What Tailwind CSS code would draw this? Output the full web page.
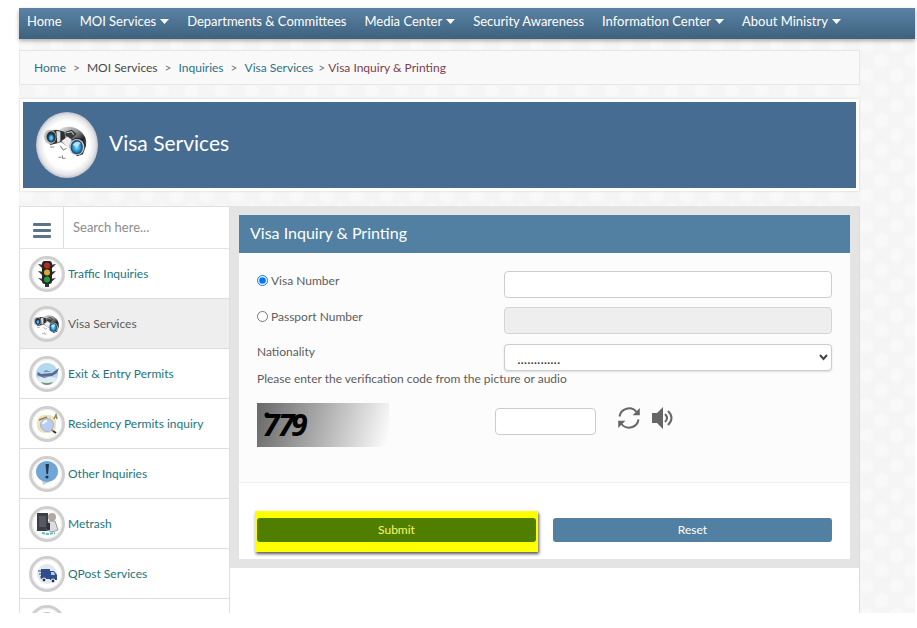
<!DOCTYPE html>
<html lang="en">
<head>
<meta charset="utf-8">
<meta name="viewport" content="width=device-width, initial-scale=1">
<title>Visa Inquiry &amp; Printing</title>
<script src="https://cdn.jsdelivr.net/npm/@tailwindcss/browser@4"></script>
</head>
<body class="bg-white pt-2 pr-[2px] pb-4 pl-[19px] font-['Lato',sans-serif] text-xs text-[#5c5c5c]">
<!-- shared symbols -->
<svg class="absolute size-0" aria-hidden="true">
  <defs>
    <radialGradient id="disc"><stop offset="0.72" stop-color="#fff"/><stop offset="0.9" stop-color="#e6e6ea"/><stop offset="1" stop-color="#bfc2c8"/></radialGradient>
    <linearGradient id="metal" x1="0" y1="0" x2="1" y2="1"><stop offset="0" stop-color="#f0f0f0"/><stop offset="0.45" stop-color="#8b8f92"/><stop offset="0.7" stop-color="#222"/><stop offset="1" stop-color="#999"/></linearGradient>
    <radialGradient id="lens"><stop offset="0" stop-color="#8fe0ff"/><stop offset="0.6" stop-color="#2994d4"/><stop offset="1" stop-color="#103a5c"/></radialGradient>
    <symbol id="binoculars" viewBox="0 0 44 34">
      <path d="M13 7C18 0 29-1 36 5c5 4 7 9 6 14l-5 6-12-4-8-5z" fill="url(#metal)"/>
      <path d="M3 6l10-2 8 2 1 8-7 3-8 2z" fill="#2b2d2f"/>
      <path d="M13 5l4 1v9l-3 2z" fill="#ddd"/>
      <path d="M22 6l6-2 5 4-5 5-6-3z" fill="#3a3a3a"/><path d="M23 7l5-1 2 3" fill="none" stroke="#ccc"/>
      <path d="M18 15l6-4 4 3-3 8z" fill="#eee"/>
      <ellipse cx="7" cy="11" rx="6" ry="7" fill="#bcbcbc"/><ellipse cx="8" cy="11" rx="4.500" ry="5.500" fill="#24323b"/><ellipse cx="8" cy="12" rx="3" ry="4" fill="url(#lens)"/>
      <path d="M28 14c6-4 13-1 14 6l-3 8-6 2z" fill="#222"/>
      <ellipse cx="33" cy="21" rx="7.500" ry="8" fill="#c9c9c9"/><ellipse cx="33" cy="21" rx="6" ry="7" fill="url(#lens)"/><path d="M29 19q3-5 8-2l-4 4z" fill="#effaff" opacity=".7"/>
      <path d="M7 21h4M17 20l3 4 3-2M15 31h3m1-2v3h3" stroke="#888" stroke-width="1" fill="none"/>
    </symbol>
    <symbol id="ring" viewBox="0 0 36 36"><circle cx="18" cy="18" r="16.500" fill="#fff" stroke="#cfcfcf" stroke-width="3"/><circle cx="18" cy="18" r="14.500" fill="none" stroke="#ececec"/></symbol>
  </defs>
</svg>

<div class="relative bg-[#f5f5f5] bg-[radial-gradient(circle_at_25%_25%,#f9f9f9_0_5px,transparent_9px),radial-gradient(circle_at_75%_75%,#f9f9f9_0_5px,transparent_9px)] bg-[length:30px_30px]">
  <nav aria-label="Main" class="relative h-[31px] bg-linear-to-b from-[#5c83a5] to-[#3d627e] shadow-[0_2px_4px_rgba(0,0,0,0.3)]">
    <ul class="flex gap-[18px] whitespace-nowrap pl-2 text-[13px] leading-[26px] text-white">
      <li><a href="#">Home</a></li>
      <li><a href="#" class="flex items-center gap-1">MOI Services <svg class="h-[5px] w-[9px]" viewBox="0 0 9 5" fill="#fff"><path d="M0 0h9L4.500 5z"/></svg></a></li>
      <li><a href="#">Departments &amp; Committees</a></li>
      <li><a href="#" class="flex items-center gap-1">Media Center <svg class="h-[5px] w-[9px]" viewBox="0 0 9 5" fill="#fff"><path d="M0 0h9L4.500 5z"/></svg></a></li>
      <li><a href="#">Security Awareness</a></li>
      <li><a href="#" class="flex items-center gap-1">Information Center <svg class="h-[5px] w-[9px]" viewBox="0 0 9 5" fill="#fff"><path d="M0 0h9L4.500 5z"/></svg></a></li>
      <li><a href="#" class="flex items-center gap-1">About Ministry <svg class="h-[5px] w-[9px]" viewBox="0 0 9 5" fill="#fff"><path d="M0 0h9L4.500 5z"/></svg></a></li>
    </ul>
  </nav>

  <div class="mr-[55px] pt-[11px]">
    <nav aria-label="Breadcrumb" class="flex h-[35px] items-center border border-[#e6e6e6] bg-[#f9f9f9] pl-[14px] text-[#2b7288]">
      <a href="#">Home</a><span class="px-[7px] text-[#777]">&gt;</span>
      <a href="#" class="text-[#484848]">MOI Services</a><span class="px-[7px] text-[#777]">&gt;</span>
      <a href="#">Inquiries</a><span class="px-[7px] text-[#777]">&gt;</span>
      <a href="#">Visa Services</a><span class="pr-[3px] pl-[5px] text-[#777]">&gt;</span>
      <span class="text-[#7b404e]" aria-current="page">Visa Inquiry &amp; Printing</span>
    </nav>

    <header class="mt-[14px] mr-px ml-px flex h-[92px] items-center border-[3px] border-white bg-[#466c91] pl-[13px] shadow-[0_0_2px_#ccc]">
      <div class="relative h-[66px] w-[62px]">
        <svg class="size-full" viewBox="0 0 62 66" preserveAspectRatio="none"><ellipse cx="31" cy="33" rx="31" ry="33" fill="url(#disc)"/><use href="#binoculars" x="7" y="11" width="45" height="40"/></svg>
      </div>
      <h1 class="pb-1 pl-[11px] text-[21px] text-white">Visa Services</h1>
    </header>

    <div class="mt-[15px] flex items-stretch bg-white">
      <aside class="w-[211px] shrink-0 border-x border-t border-[#e0e0e0] bg-white">
        <div class="flex h-[42px] border-b border-[#e2e2e2]">
          <button type="button" aria-label="Menu" class="flex w-11 items-center justify-center border-r border-[#ddd] pt-2">
            <svg class="h-[17px] w-[18px]" viewBox="0 0 18 17" fill="#5b7488"><rect width="18" height="3" rx="1"/><rect y="6" width="18" height="3" rx="1"/><rect y="12" width="18" height="3" rx="1"/></svg>
          </button>
          <input type="search" aria-label="Search" placeholder="Search here..." class="min-w-0 flex-1 pl-[9px] text-[13px] placeholder:text-[#8c8c8c]">
        </div>
        <ul class="text-[#22747f]">
          <li class="h-[50px] border-b border-[#ddd]"><a href="#" class="flex h-full items-center gap-[3px] pl-[9px]">
            <svg class="size-9 shrink-0" viewBox="0 0 36 36"><use href="#ring"/><path d="M9 8l6 1v5zM27 8l-6 1v5zM9 15l6 1v5zM27 15l-6 1v5zM9 22l6 1v4zM27 22l-6 1v4z" fill="#333"/><rect x="13" y="5" width="10" height="23" rx="3" fill="#252525"/><path d="M16 28h4v3h-4z" fill="#333"/><circle cx="18" cy="9.500" r="3" fill="#b52a24"/><circle cx="18" cy="16.500" r="3" fill="#d9a92a"/><circle cx="18" cy="23.500" r="3" fill="#259b46"/></svg>Traffic Inquiries</a></li>
          <li class="h-[50px] border-b border-[#ddd] bg-[#eee]"><a href="#" class="flex h-full items-center gap-[3px] pl-[9px] text-[#5c5c5c]">
            <svg class="size-9 shrink-0" viewBox="0 0 36 36"><use href="#ring"/><use href="#binoculars" x="4" y="8" width="27" height="22"/></svg>Visa Services</a></li>
          <li class="h-[50px] border-b border-[#ddd]"><a href="#" class="flex h-full items-center gap-[3px] pl-[9px]">
            <svg class="size-9 shrink-0" viewBox="0 0 36 36"><use href="#ring"/><circle cx="18" cy="18" r="11" fill="#b3d9ee"/><path d="M8 22q10-3 20 0-3 7-10 7t-10-7z" fill="#e2ecf2"/><path d="M12 26q6 2 12 0-2 3-6 3t-6-3z" fill="#6b9b77"/><path d="M9 16l3 2 11-1 7-5-2 5-5 3-10 1-5-2z" fill="#596b93"/><path d="M14 16l3-2 5 2M15 20l-2 2h3l5-2" fill="#7c8fae"/></svg>Exit &amp; Entry Permits</a></li>
          <li class="h-[50px] border-b border-[#ddd]"><a href="#" class="flex h-full items-center gap-[3px] pl-[9px]">
            <svg class="size-9 shrink-0" viewBox="0 0 36 36"><use href="#ring"/><rect x="8" y="9" width="19" height="18" rx="7" fill="#eee2bd"/><path d="M10 14l8-3m7 2l2-4 1 4" stroke="#8a8152" stroke-width="1.500" fill="none"/><path d="M22 23l2 2" stroke="#999" stroke-width="2"/><path d="M24 25l3 2" stroke="#333" stroke-width="2"/><circle cx="18" cy="19" r="6.500" fill="#b9cdf3" stroke="#aab4c6"/><path d="M14 18q1-3 4-3" stroke="#fff" stroke-width="2" fill="none"/></svg>Residency Permits inquiry</a></li>
          <li class="h-[50px] border-b border-[#ddd]"><a href="#" class="flex h-full items-center gap-[3px] pl-[9px]">
            <svg class="size-9 shrink-0" viewBox="0 0 36 36"><use href="#ring"/><path d="M13 24l1 5 8-4z" fill="#c5cbd3"/><ellipse cx="18" cy="15.500" rx="11" ry="10.500" fill="#6fa6d6"/><path d="M16.500 8h3.500l-1 10h-1.500z" fill="#1e3556"/><circle cx="18" cy="21" r="1.600" fill="#1e3556"/></svg>Other Inquiries</a></li>
          <li class="h-[50px] border-b border-[#ddd]"><a href="#" class="flex h-full items-center gap-[3px] pl-[9px]">
            <svg class="size-9 shrink-0" viewBox="0 0 36 36"><use href="#ring"/><rect x="8" y="7" width="11" height="18" fill="#3d3f45"/><rect x="10" y="10" width="7" height="11" fill="#555961"/><circle cx="23" cy="11" r="4" fill="#b5a8a2"/><path d="M20 15l6 0 3 9-6 2-5-2z" fill="#d9dde0" stroke="#999"/><rect x="18" y="17" width="3" height="7" fill="#333"/><path d="M13 27l6 1 7-1" stroke="#5bbcc5" stroke-width="2" fill="none" stroke-dasharray="3 1"/></svg>Metrash</a></li>
          <li class="h-[50px] border-b border-[#ddd]"><a href="#" class="flex h-full items-center gap-[3px] pl-[9px]">
            <svg class="size-9 shrink-0" viewBox="0 0 36 36"><use href="#ring"/><circle cx="18" cy="18" r="10" fill="#e3e7ee"/><path d="M12 13h9v10h-9zM21 15h4l3 4v5h-7z" fill="#2e4d8c"/><path d="M9 15h4M10 18h4M11 21h3" stroke="#2e4d8c"/><path d="M22 16h3l1 3h-4z" fill="#b9cbe8"/><circle cx="15" cy="24" r="2" fill="#1e2d50" stroke="#fff"/><circle cx="24" cy="25" r="2" fill="#1e2d50" stroke="#fff"/></svg>QPost Services</a></li>
          <li class="h-[14px] overflow-hidden pt-[6px] pl-[9px]"><svg class="size-9" viewBox="0 0 36 36"><use href="#ring"/><circle cx="18" cy="18" r="11" fill="#c4c4c4"/></svg></li>
        </ul>
      </aside>

      <main class="min-w-0 flex-1 border-r border-[#ddd]">
        <form class="border-[9px] border-[#e4e4e4] bg-[#fcfcfc]">
          <h2 class="h-[38px] bg-[#5280a3] pl-[11px] text-base leading-9 text-white">Visa Inquiry &amp; Printing</h2>
          <div class="h-[230px] border-b border-[#f0f0f0] px-[18px] pt-[18px]">
            <div class="flex">
              <label for="visa" class="flex h-[19px] flex-1 items-center gap-[3px]"><input id="visa" type="radio" name="kind" checked class="size-[11px]">Visa Number</label>
              <input type="text" aria-label="Visa Number" class="h-[27px] w-[57%] rounded-[4px] border border-[#ccc] bg-white px-3">
            </div>
            <div class="mt-[9px] flex">
              <label for="passport" class="flex h-[19px] flex-1 items-center gap-[3px]"><input id="passport" type="radio" name="kind" class="size-[11px]">Passport Number</label>
              <input type="text" aria-label="Passport Number" disabled class="h-[27px] w-[57%] rounded-[4px] border border-[#d4d4d4] bg-[#eee] px-3">
            </div>
            <div class="mt-[10px] flex">
              <label for="nation" class="h-[27px] flex-1">Nationality</label>
              <div class="relative w-[57%]">
                <select id="nation" class="block h-[27px] w-full appearance-none rounded-[4px] border border-[#ccc] bg-white px-3 pt-[3px] text-sm text-[#333] shadow-[0_1px_2px_#ddd]"><option>.............</option></select>
                <svg class="pointer-events-none absolute top-[10px] right-1 h-[7px] w-[9px]" viewBox="0 0 9 7" fill="none" stroke="#444" stroke-width="2"><path d="M1 1l3.500 4L8 1"/></svg>
              </div>
            </div>
            <p class="leading-4"><label for="code">Please enter the verification code from the picture or audio</label></p>
            <div class="mt-4 flex">
              <div class="h-11 w-[132px] bg-linear-105 from-[#686868] to-white">
                <svg class="size-full" viewBox="0 0 132 44"><text y="33" x="6 21 34" class="font-['Open_Sans',sans-serif] text-[30px] font-bold italic" fill="#000">779</text><circle cx="10" cy="12" r="2.500"/></svg>
              </div>
              <input id="code" type="text" class="mt-[5px] ml-[106px] h-[27px] w-[101px] rounded-[4px] border border-[#ccc] bg-white px-2">
              <button type="button" aria-label="New code" class="mt-1 ml-[22px] size-[22px]"><svg viewBox="0 0 22 22" fill="none" stroke="#666" stroke-width="2"><path d="M1.500 9.500A9.600 9.600 0 0 1 18.500 5M20.500 12.500A9.600 9.600 0 0 1 3.500 17"/><path d="M21.800 1v7.200h-7.200zM.200 21v-7.200h7.200z" fill="#666" stroke="none"/></svg></button>
              <button type="button" aria-label="Play audio" class="mt-1 ml-3 size-[22px]"><svg viewBox="0 0 22 22" fill="none" stroke="#666" stroke-width="2"><path d="M0 6h5l6-6v22l-6-6H0z" fill="#666" stroke="none"/><path d="M13 7q4 4 0 8M16 4q7 7 0 14"/></svg></button>
            </div>
          </div>
          <div class="grid grid-cols-2 gap-[17px] bg-white px-[18px] pt-[35px] pb-[17px]">
            <div class="relative z-0">
              <div class="absolute -inset-x-[2px] -top-[7px] -bottom-[10px] -z-10 bg-[#ff0] shadow-[1px_2px_3px_#555]"></div>
              <button type="submit" class="block h-6 w-full rounded-[3px] bg-[#507f00] text-[#f5f76a]">Submit</button>
            </div>
            <button type="reset" class="h-6 rounded-[3px] bg-[#5280a3] text-white">Reset</button>
          </div>
        </form>
      </main>
    </div>
  </div>
</div>
</body>
</html>
